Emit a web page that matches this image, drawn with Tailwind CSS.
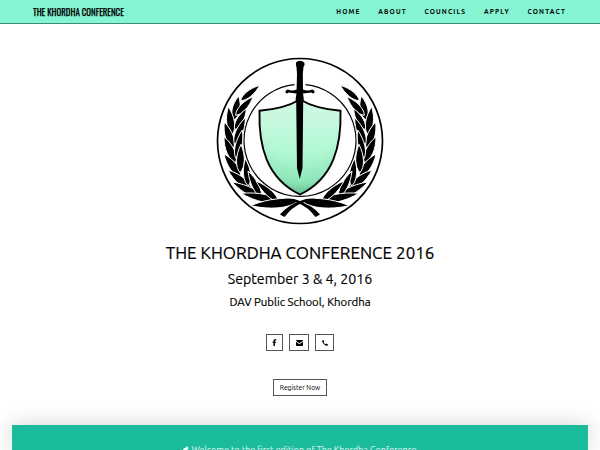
<!DOCTYPE html>
<html lang="en">
<head>
<meta charset="utf-8">
<title>The Khordha Conference</title>
<script src="https://cdn.jsdelivr.net/npm/@tailwindcss/browser@4"></script>
</head>
<body class="bg-white text-black overflow-hidden h-[450px] font-['Ubuntu','Noto_Sans',sans-serif]">
<header class="h-6 bg-[#84f4d3] border-b border-[#3f8c76] flex items-center justify-between pl-[33px] pr-[34px]">
  <a class="block w-[91px] whitespace-nowrap font-['Oswald','Roboto',sans-serif] text-[10.5px] leading-none font-normal"><span class="inline-block origin-left scale-x-[0.84] [-webkit-text-stroke:0.25px_black]">THE KHORDHA CONFERENCE</span></a>
  <nav class="flex pt-px gap-[17.7px] text-[6.6px] leading-none font-bold tracking-[1.15px] whitespace-nowrap">
    <a>HOME</a><a>ABOUT</a><a>COUNCILS</a><a>APPLY</a><a>CONTACT</a>
  </nav>
</header>
<main class="flex flex-col items-center h-[426px] overflow-hidden">
  <svg class="mt-[26px] w-[180px] h-[180px] shrink-0" viewBox="210 50 180 180">
    <defs>
      <linearGradient id="g" x1="0" y1="0" x2="0" y2="1">
        <stop offset="0" stop-color="#d3f8e4"/><stop offset=".5" stop-color="#b4f8d5"/><stop offset="1" stop-color="#8af0bb"/>
      </linearGradient>
      <radialGradient id="s" gradientUnits="userSpaceOnUse" cx="300" cy="122" r="76">
        <stop offset=".5" stop-color="#286b4a" stop-opacity="0"/><stop offset=".8" stop-color="#286b4a" stop-opacity=".1"/><stop offset="1" stop-color="#286b4a" stop-opacity=".5"/>
      </radialGradient>
      <g id="branch">
        <g id="leaves" transform="translate(210 50) scale(.33333)"></g>
        <path d="M272 201.500Q288 196 300 201Q312 205 320 214.500L315.500 217Q308 207 298 203Q290 199.500 272 201.500Z"/>
      </g>
    </defs>
    <circle cx="300" cy="141" r="82.500" fill="none" stroke="#000" stroke-width="1.700"/>
    <path d="M294.500 84.700A56 56 0 1 0 305.500 84.700" fill="none" stroke="#000" stroke-width="1.200"/>
    <use href="#branch"/><use href="#branch" transform="translate(600 0) scale(-1 1)"/>
    <path d="M259.500 110.700Q284 109 300 99.500Q316 109 340.500 110.700C341.500 145 334 178 300 194.500C266 178 258.500 145 259.500 110.700Z" fill="url(#g)"/>
    <path d="M259.500 110.700Q284 109 300 99.500Q316 109 340.500 110.700C341.500 145 334 178 300 194.500C266 178 258.500 145 259.500 110.700Z" fill="url(#s)" stroke="#000" stroke-width="1.900"/>
    <path d="M296 63Q296.500 61 300 60.800Q303.500 61 304.500 63Q305 65 303.500 67L302.800 74L303 89.500Q308 91.500 312 89.500Q315 90 314.500 92.500Q313 94.500 311.500 92.500Q307 93 303 93.500L303.800 99L303.200 102L302.500 168L299.800 179L297 168L296.200 102L295.600 99L296.500 93.500Q292 93 288.500 92.500Q287 94.500 285.500 92.500Q285 90 288 89.500Q292 91.500 296.600 89.500L297 74L296.500 67Q295.500 65 296 63Z"/>
  </svg>
  <h1 class="mt-[11px] h-[24px] text-[17.4px] leading-[24px] whitespace-nowrap"><span class="inline-block scale-x-[0.98] [-webkit-text-stroke:0.2px_black]">THE KHORDHA CONFERENCE 2016</span></h1>
  <h2 class="mt-[4px] text-[14.2px] leading-[20px] whitespace-nowrap [-webkit-text-stroke:0.15px_black]">September 3 &amp; 4, 2016</h2>
  <h3 class="mt-[5px] text-[11.4px] leading-[16px] whitespace-nowrap [-webkit-text-stroke:0.2px_black]">DAV Public School, Khordha</h3>
  <div class="mt-[24px] flex justify-center gap-[6px] h-[17px]">
    <a class="w-[17px] h-[17px] border border-[#555] flex items-center justify-center"><svg class="w-[5px] h-[7px]" viewBox="0 0 5 8"><path d="M1.300 8V4.400H.2V3h1.100V2Q1.300.3 3 .3h1.500v1.300h-.9q-.6 0-.6.6V3h1.400l-.2 1.400H3V8z"/></svg></a>
    <a class="w-[20px] h-[17px] border border-[#555] flex items-center justify-center"><svg class="w-[7px] h-[6px]" viewBox="0 0 7 6"><path d="M0 .7Q0 0 .7 0h5.600Q7 0 7 .7L3.500 3.300zM0 1.700l3.500 2.500L7 1.700V5.300Q7 6 6.300 6H.7Q0 6 0 5.300z"/></svg></a>
    <a class="w-[19px] h-[17px] border border-[#555] flex items-center justify-center"><svg class="w-[6px] h-[6px]" viewBox="0 0 6 6"><path d="M.3.500L1.500 0l.8 1.500-.7.800q.6 1.400 2 2l.8-.7L6 4.400 5.500 5.700Q4 6.300 2 4.300-.3 2 .3.500z"/></svg></a>
  </div>
  <a class="mt-[28px] w-[54px] h-[17px] border border-[#555] text-[6.7px] leading-[15px] text-center whitespace-nowrap">Register Now</a>
  <section class="mt-[29px] w-[576px] h-[25px] shrink-0 bg-[#1abc9c] shadow-[0_0_22px_rgba(0,0,0,0.18)] pt-[19px] pr-px flex justify-center items-start gap-[2px] text-white/85">
    <svg class="mt-[2px] w-[7px] h-[7px]" viewBox="0 0 7 7" fill="#e5fff9"><path d="M4.300 0L7 2.300 5.900 2.700 4.800 5.200Q3.500 6.200 1 6.500L0 7 .7 4.800Q1.200 2.800 2 2.200L4 1.500z"/></svg>
    <p class="text-[8.95px] leading-[12px] whitespace-nowrap">Welcome to the first edition of The Khordha Conference</p>
  </section>
</main>
<script>
// Each leaf: base x, base y, tip x, tip y, half width
const leaves = [
  [92,152,149,106,10],
  [72,210,86,138,13],[77,196,129,140,11],
  [67,254,55,170,13],[74,239,109,176,11],
  [70,296,43,216,13],[73,282,106,203,12],
  [77,338,42,260,13],[77,324,97,240,11],
  [92,380,42,312,13],[90,368,93,283,13],
  [126,420,54,360,13],[115,408,106,326,12],
  [166,448,66,396,13],[154,442,114,363,11],
  [214,456,93,430,13],[206,455,138,393,11],
  [262,455,122,467,15]
];
document.getElementById('leaves').innerHTML = leaves.map(([x,y,a,b,w]) => {
  const dx=a-x, dy=b-y, l=Math.hypot(dx,dy), nx=-dy/l*w*1.2, ny=dx/l*w*1.2;
  const p=(t,s)=>(x+dx*t+nx*s)+' '+(y+dy*t+ny*s);
  return `<path d="M${x} ${y}C${p(.2,1)} ${p(.6,1)} ${a} ${b}C${p(.6,-1)} ${p(.2,-1)} ${x} ${y}Z" stroke="#fff" stroke-width="3"/>`;
}).join('');
</script>
</body>
</html>
